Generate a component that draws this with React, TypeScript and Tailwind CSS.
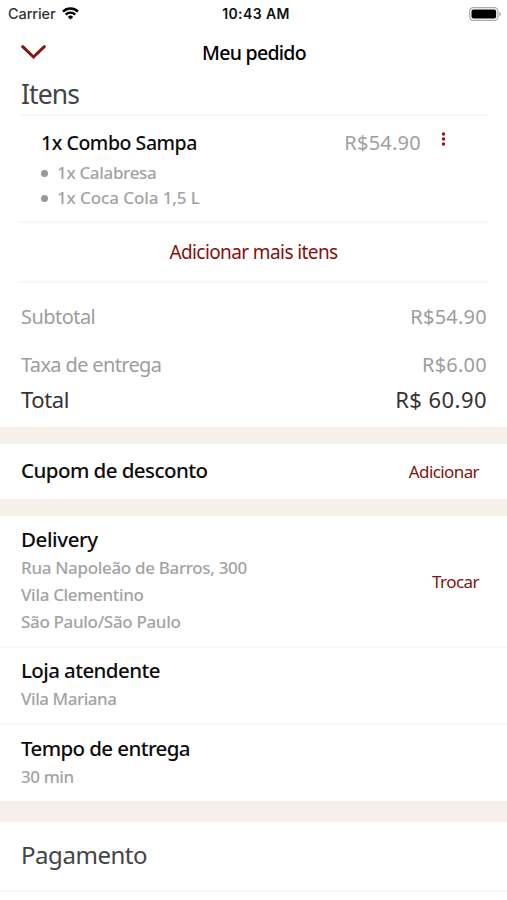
import React from 'react';

interface SummaryRowProps {
  label: string;
  value: string;
  className?: string;
  labelClassName?: string;
  valueClassName?: string;
}

const SummaryRow: React.FC<SummaryRowProps> = ({
  label,
  value,
  className = '',
  labelClassName = '',
  valueClassName = '',
}) => (
  <div className={`flex items-center justify-between leading-6 ${className}`}>
    <span className={labelClassName}>{label}</span>
    <span className={valueClassName}>{value}</span>
  </div>
);

const StatusBar: React.FC = () => (
  <div className="grid h-[27px] grid-cols-3 items-center pl-2 pr-[6px] font-['Inter',sans-serif] text-[#111]">
    <div className="flex items-center gap-[6px]">
      <span className="text-[14.5px] tracking-[-0.1px] text-[#333]">Carrier</span>
      <svg width="17" height="13" viewBox="0 0 17 13" fill="none" stroke="#000" strokeWidth="2.4">
        <path d="M1 4.6a10.8 10.8 0 0 1 15 0" />
        <path d="M3.7 7.6a6.9 6.9 0 0 1 9.6 0" />
        <path d="M8.5 12.6 5.8 9.9a3.9 3.9 0 0 1 5.4 0z" fill="#000" stroke="none" />
      </svg>
    </div>
    <span className="pl-[3px] text-center text-[14px] font-semibold tracking-[0.4px]">10:43 AM</span>
    <svg className="justify-self-end" width="32" height="14" viewBox="0 0 32 14">
      <rect x="0.7" y="0.7" width="28.2" height="12.6" rx="3.6" fill="#fff" stroke="#aaa" strokeWidth="1.2" />
      <rect x="2.5" y="2.5" width="24.6" height="9" rx="2" fill="#000" />
      <path d="M30.3 5v4c.9-.3 1.4-1.1 1.4-2s-.5-1.7-1.4-2z" fill="#999" />
    </svg>
  </div>
);

const Header: React.FC = () => (
  <header className="grid h-[50px] grid-cols-3 items-center px-[21px]">
    <button className="justify-self-start" aria-label="Fechar">
      <svg width="26" height="16" viewBox="0 0 26 16" fill="none" stroke="#87150f" strokeWidth="3" strokeLinecap="round">
        <path d="M1.7 2.7 12.5 13 23.3 2.7" />
      </svg>
    </button>
    <h1 className="whitespace-nowrap pl-px pt-[2px] text-center text-[19.5px] tracking-[-0.72px] text-black">Meu pedido</h1>
  </header>
);

const Divider: React.FC = () => <div className="h-[2px] bg-[#f7f7f7]" />;

const extras = ['1x Calabresa', '1x Coca Cola 1,5 L'];
const address = ['Rua Napoleão de Barros, 300', 'Vila Clementino', 'São Paulo/São Paulo'];

const App: React.FC = () => {
  return (
    <div className="h-[900px] w-[507px] overflow-hidden bg-white font-['Noto_Sans',sans-serif] font-medium text-[#0d0d0d]">
      <StatusBar />
      <Header />

      {/* Items */}
      <section className="-mt-[2px] px-[20px]">
        <h2 className="h-[39px] pl-px text-[26.5px] font-normal leading-[38px] tracking-[-0.9px] text-[#444]">Itens</h2>
        <Divider />
        <div className="h-[105px] pl-[21px] pr-[40px] pt-[15px]">
          <div className="flex justify-between text-[20px] leading-6">
            <span className="text-[19.5px] tracking-[-0.45px]">1x Combo Sampa</span>
            <div className="flex gap-5">
              <span className="font-normal tracking-[0.25px] text-[#a0a0a0]">R$54.90</span>
              <svg className="mt-px" width="6" height="14" viewBox="0 0 6 14" fill="#8f1616">
                <circle cx="2.5" cy="2" r="1.7" />
                <circle cx="2.5" cy="7" r="1.7" />
                <circle cx="2.5" cy="12" r="1.7" />
              </svg>
            </div>
          </div>
          <ul className="mt-[6px] text-[17px] leading-[24.5px] text-[#a3a3a3]">
            {extras.map((extra, i) => (
              <li key={extra} className="flex items-center gap-[9px]">
                <span className="mt-px h-[7px] w-[7px] rounded-full bg-[#999]" />
                <span className={i === 0 ? 'tracking-[-0.33px]' : 'tracking-[-0.1px]'}>{extra}</span>
              </li>
            ))}
          </ul>
        </div>
        <Divider />
        <button className="flex h-[58px] w-full items-center justify-center text-[19px] font-normal tracking-[-0.6px] text-[#85100d]">
          <span>Adicionar mais itens</span>
        </button>
        <Divider />
      </section>

      {/* Totals */}
      <section className="h-[143.5px] pl-[21px] pr-5 pt-[22px] text-[20px] font-normal text-[#9d9d9d]">
        <SummaryRow label="Subtotal" value="R$54.90" labelClassName="tracking-[-0.55px]" valueClassName="tracking-[0.25px]" />
        <SummaryRow
          className="mt-6"
          label="Taxa de entrega"
          value="R$6.00"
          labelClassName="tracking-[-0.65px]"
          valueClassName="tracking-[0.25px]"
        />
        <SummaryRow
          className="mt-[10px] text-[22px] text-[#333]"
          label="Total"
          value="R$ 60.90"
          labelClassName="tracking-[-0.4px]"
          valueClassName="tracking-[0.45px]"
        />
      </section>

      <div className="h-[17.5px] bg-[#f6f0ea]" />

      {/* Coupon */}
      <section className="flex h-[55px] items-center justify-between pl-[21px] pr-[28px]">
        <h3 className="pb-[3px] text-[20.5px] tracking-[-0.55px]">Cupom de desconto</h3>
        <button className="text-[17px] font-normal tracking-[-0.6px] text-[#85100d]">Adicionar</button>
      </section>

      <div className="h-[17px] bg-[#f6f0ea]" />

      {/* Delivery address */}
      <section className="flex h-[130px] items-center justify-between pl-[21px] pr-[28px]">
        <div className="self-start pt-[10px]">
          <h3 className="text-[20.5px] leading-[26px] tracking-[-0.4px]">Delivery</h3>
          <div className="mt-[2px] text-[17px] leading-[27px] tracking-[-0.33px] text-[#a3a3a3]">
            {address.map((line) => (
              <p key={line}>{line}</p>
            ))}
          </div>
        </div>
        <button className="pt-[2px] text-[17px] font-normal tracking-[-0.55px] text-[#85100d]">Trocar</button>
      </section>
      <Divider />

      <section className="h-[75px] pl-[21px] pt-[9px]">
        <h3 className="text-[20.5px] leading-[26px] tracking-[-0.6px]">Loja atendente</h3>
        <p className="mt-[2px] text-[17px] leading-[27px] tracking-[-0.45px] text-[#a3a3a3]">Vila Mariana</p>
      </section>
      <Divider />

      <section className="h-[76px] pl-[21px] pt-[10px]">
        <h3 className="text-[20.5px] leading-[26px] tracking-[-0.6px]">Tempo de entrega</h3>
        <p className="mt-[2px] text-[17px] leading-[27px] tracking-[-0.4px] text-[#a3a3a3]">30 min</p>
      </section>

      <div className="h-[21px] bg-[#f6f0ea]" />

      {/* Payment */}
      <section className="flex h-[68px] items-center pb-[3px] pl-[21px]">
        <h2 className="text-[24px] font-normal tracking-[-0.45px] text-[#444]">Pagamento</h2>
      </section>
      <Divider />
    </div>
  );
};

export default App;
